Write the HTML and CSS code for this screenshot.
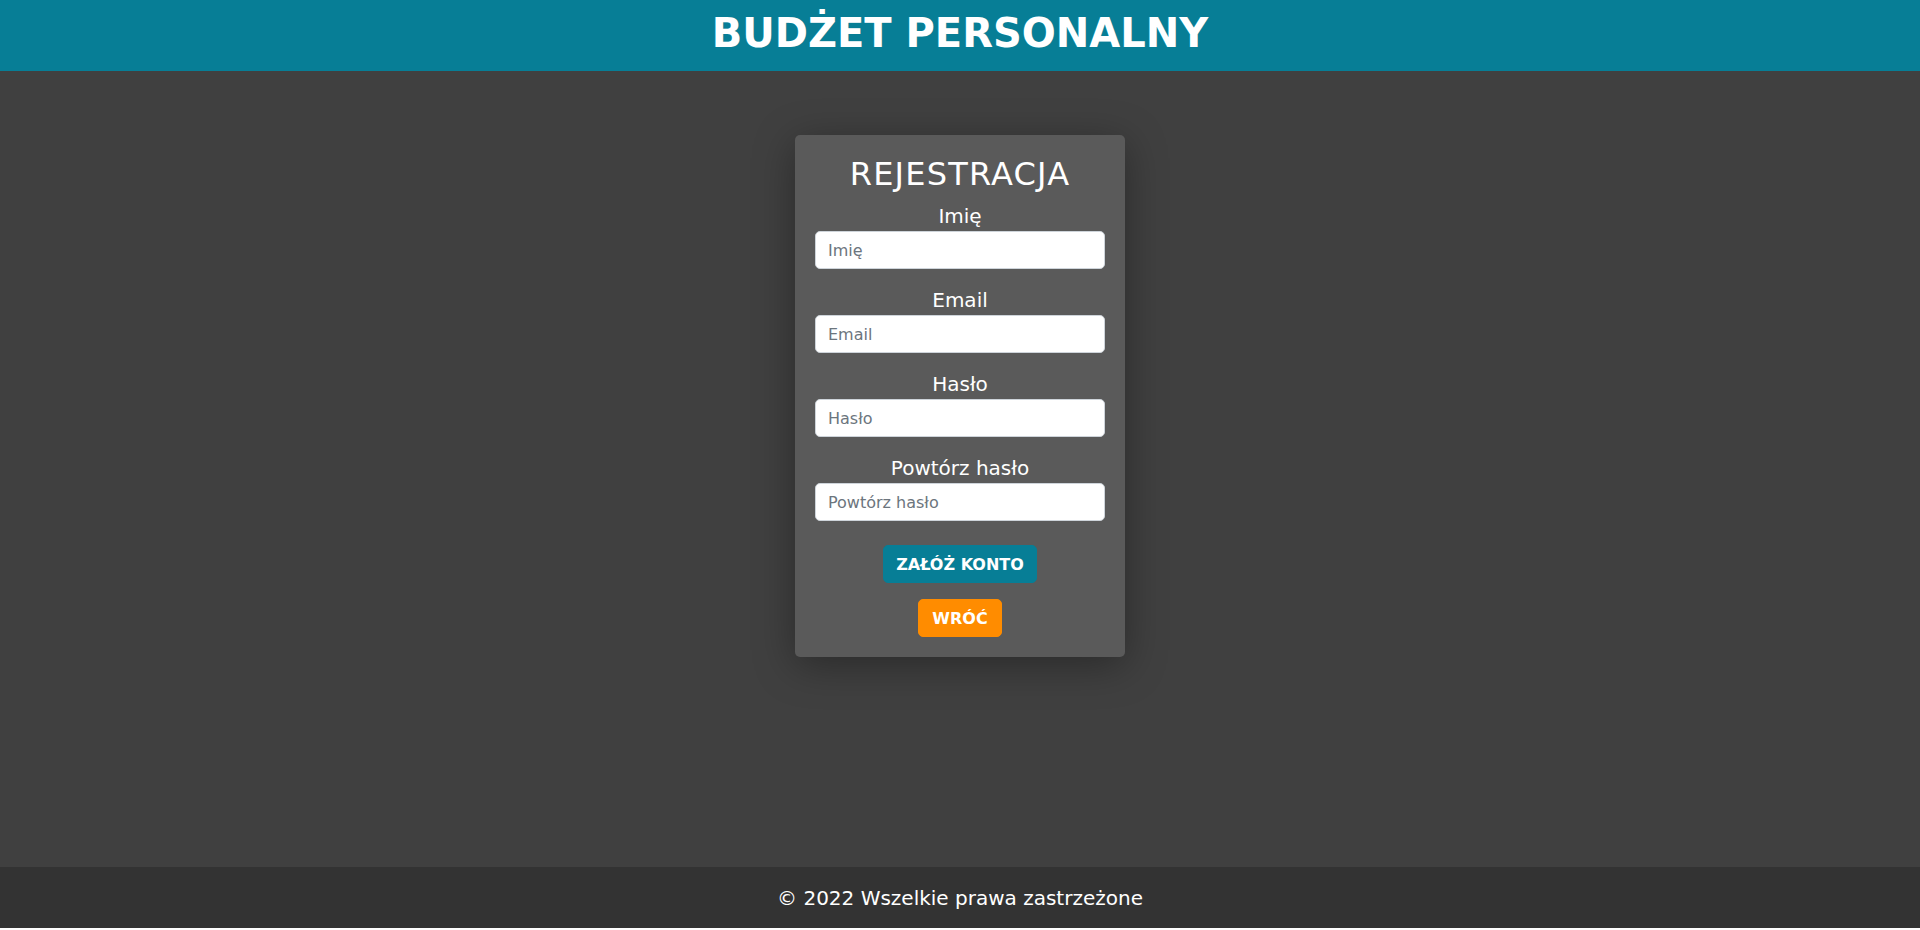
FILE: index.html
```html
<!DOCTYPE html>
<html lang="pl">
<head>
<meta charset="utf-8">
<title>Budżet personalny</title>
<link rel="stylesheet" href="styles.css">
</head>
<body>
<div class="page">
  <header class="top">
    <h1 class="brand">BUDŻET PERSONALNY</h1>
  </header>
  <main class="main">
    <form class="card">
      <h2 class="card-title">REJESTRACJA</h2>
      <div class="group">
        <label class="label" for="imie">Imię</label>
        <input class="input" id="imie" type="text" placeholder="Imię">
      </div>
      <div class="group">
        <label class="label" for="email">Email</label>
        <input class="input" id="email" type="email" placeholder="Email">
      </div>
      <div class="group">
        <label class="label" for="haslo">Hasło</label>
        <input class="input" id="haslo" type="password" placeholder="Hasło">
      </div>
      <div class="group">
        <label class="label" for="haslo2">Powtórz hasło</label>
        <input class="input" id="haslo2" type="password" placeholder="Powtórz hasło">
      </div>
      <div class="actions">
        <button class="btn btn-teal" type="button">ZAŁÓŻ KONTO</button>
        <button class="btn btn-orange" type="button">WRÓĆ</button>
      </div>
    </form>
  </main>
  <footer class="foot">© 2022 Wszelkie prawa zastrzeżone</footer>
</div>
</body>
</html>
```
FILE: styles.css
```css
* { box-sizing: border-box; }
html, body { margin: 0; padding: 0; }
body {
  background: #ffffff;
  font-family: "DejaVu Sans", Verdana, sans-serif;
  color: #ffffff;
}
.page {
  display: flex;
  flex-direction: column;
  height: 928px;
}
.top {
  height: 71px;
  background: #077e96;
  padding-top: 9px;
  text-align: center;
}
.brand {
  margin: 0;
  font-size: 40px;
  line-height: 48px;
  font-weight: bold;
  color: #ffffff;
}
.main {
  flex: 1;
  background: #404040;
  display: flex;
  justify-content: center;
  align-items: flex-start;
  padding-top: 64px;
}
.card {
  width: 330px;
  background: #5a5a5a;
  border-radius: 5px;
  padding: 20px;
  box-shadow: 0 8px 40px rgba(0, 0, 0, 0.35);
  text-align: center;
  display: flex;
  flex-direction: column;
}
.card-title {
  margin: 0 0 8px;
  font-size: 32px;
  line-height: 1.2;
  font-weight: normal;
  letter-spacing: 1.2px;
}
.group {
  display: flex;
  flex-direction: column;
  margin-bottom: 16px;
}
.label {
  font-size: 20px;
  line-height: 30px;
}
.input {
  height: 38px;
  width: 100%;
  padding: 6px 12px;
  font-family: "DejaVu Sans", Verdana, sans-serif;
  font-size: 16px;
  line-height: 24px;
  color: #212529;
  background: #ffffff;
  border: 1px solid #ced4da;
  border-radius: 5px;
  outline: none;
}
.input::placeholder { color: #6c757d; opacity: 1; }
.actions {
  display: flex;
  flex-direction: column;
  align-items: center;
  gap: 16px;
  padding-top: 8px;
}
.btn {
  height: 38px;
  padding: 0 12px;
  border: 1px solid transparent;
  border-radius: 5px;
  font-family: "DejaVu Sans", Verdana, sans-serif;
  font-size: 16px;
  font-weight: bold;
  color: #ffffff;
  cursor: pointer;
}
.btn-teal { background: #077e96; border-color: #077e96; }
.btn-orange { background: #ff8c00; border-color: #ff8c00; padding: 0 13px; }
.foot {
  height: 61px;
  background: #333333;
  padding-top: 16px;
  text-align: center;
  font-size: 20px;
  line-height: 30px;
}
```
